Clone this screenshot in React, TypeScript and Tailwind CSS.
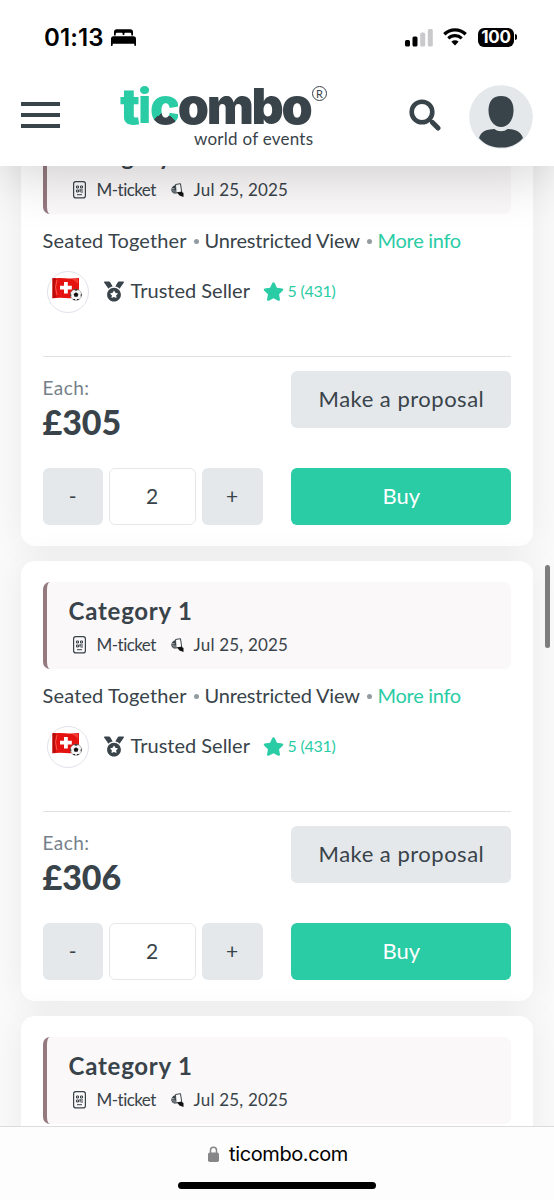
import { FaMedal, FaStar } from "react-icons/fa";

interface Listing {
  id: number;
  category: string;
  ticketType: string;
  date: string;
  price?: string;
  quantity?: number;
  rating?: string;
}

const listings: Listing[] = [
  { id: 1, category: "Category 1", ticketType: "M-ticket", date: "Jul 25, 2025", price: "£305", quantity: 2, rating: "5 (431)" },
  { id: 2, category: "Category 1", ticketType: "M-ticket", date: "Jul 25, 2025", price: "£306", quantity: 2, rating: "5 (431)" },
  { id: 3, category: "Category 1", ticketType: "M-ticket", date: "Jul 25, 2025" },
];

function StatusBar() {
  return (
    <div className="flex h-[74px] items-center pl-[44px] pr-[37px] text-black">
      <span className="mt-[2px] w-[60px] whitespace-nowrap font-['Inter',sans-serif] text-[24px] font-semibold leading-none tracking-[0.1px]">
        01:13
      </span>
      <svg className="ml-[7px] h-[17px] w-[25px]" viewBox="0 0 25 17" fill="currentColor">
        <path d="M3 6.500V3q0-2.800 2.800-2.800h13.400Q22 .2 22 3v3.500h-1.700V5q0-1.300-1.300-1.300h-4.500q-1.200 0-1.200 1.200V6h-1.600V4.900q0-1.200-1.200-1.200H6Q4.700 3.700 4.700 5v1.500z" />
        <path d="M2.500 7.300h20Q25 7.300 25 10v6.200q0 .8-.8.800t-.9-.8v-1.500H1.700v1.500q0 .8-.9.800T0 16.200V10q0-2.700 2.500-2.700z" />
      </svg>

      <div className="ml-auto flex items-center">
        <svg className="h-[19px] w-[28px]" viewBox="0 0 28 19">
          <rect x="0" y="12" width="5" height="6.500" rx="1.500" fill="#000" />
          <rect x="7.500" y="8.500" width="5" height="10" rx="1.500" fill="#000" />
          <rect x="15.200" y="4.500" width="5" height="14" rx="1.500" fill="#c9c9cb" />
          <rect x="22.800" y="1" width="5" height="17.500" rx="1.500" fill="#c9c9cb" />
        </svg>
        <svg className="ml-[10px] h-[18px] w-[24px]" viewBox="0 0 24 18" fill="none" stroke="#000">
          <path d="M1.300 6.200a15.500 15.500 0 0 1 21.400 0" strokeWidth="3.300" />
          <path d="M5.300 10.300a9.700 9.700 0 0 1 13.400 0" strokeWidth="3.100" />
          <path d="M12 17.500l-3.600-3.700a5.100 5.100 0 0 1 7.200 0z" fill="#000" stroke="none" />
        </svg>
        <div className="ml-[11px] flex h-[19px] w-[36px] items-center justify-center rounded-[6px] bg-black font-['Inter',sans-serif] text-[17px] font-bold leading-none tracking-[-0.2px] text-white">
          100
        </div>
        <div className="ml-px h-[6px] w-[2px] rounded-r-full bg-black" />
      </div>
    </div>
  );
}

function Logo() {
  return (
    <div className="relative ml-[60px] w-[207px]">
      <div className="flex h-[55px] items-end whitespace-nowrap pt-[10px] font-['Inter',sans-serif] text-[50px] font-black leading-[45px] tracking-[-2.3px] text-[#39434a]">
        <span className="text-[#2acca5]">t</span>
        <span className="font-['Roboto',sans-serif] tracking-[-1.5px] text-[#2acca5]">i</span>
        <span className="bg-[conic-gradient(from_130deg_at_50%_60%,#39434a_0_100deg,#2acca5_100deg)] bg-clip-text text-transparent">
          c
        </span>
        <span>ombo</span>
      </div>
      <span className="absolute right-0 top-[12px] flex h-[15px] w-[15px] items-center justify-center rounded-full border border-[#39434a] text-[11px] leading-none text-[#39434a]">
        R
      </span>
      <div className="ml-[74px] whitespace-nowrap text-[17px] leading-[20px] tracking-[0.25px] text-[#39434a]">
        world of events
      </div>
    </div>
  );
}

function Header() {
  return (
    <header className="relative z-10 h-[166px] bg-white shadow-[0_8px_52px_rgba(0,0,0,0.18)]">
      <StatusBar />
      <div className="flex items-start pl-[21px]">
        <div className="mt-[28px] flex w-[39px] flex-col gap-[7px]">
          <span className="h-[4px] bg-[#39434a]" />
          <span className="h-[4px] bg-[#39434a]" />
          <span className="h-[4px] bg-[#39434a]" />
        </div>
        <Logo />
        <svg className="ml-[82px] mt-[25px] h-[32px] w-[32px]" viewBox="0 0 32 32" fill="none" stroke="#39434a">
          <circle cx="13" cy="13" r="10.300" strokeWidth="4.600" />
          <path d="M20.500 20.500l2 2" strokeWidth="3" />
          <path d="M23.500 23.500l5.500 5.500" strokeWidth="5" strokeLinecap="round" />
        </svg>
        <svg className="ml-[28px] mt-[11px] h-[64px] w-[64px]" viewBox="0 0 64 64">
          <circle cx="32" cy="32" r="31.800" fill="#e4e8eb" />
          <path d="M32 11c8.500 0 12.500 5.500 12.500 14.500C44.500 35 39 42 32 42s-12.500-7-12.500-16.500C19.500 16.500 23.500 11 32 11z" fill="#39434a" />
          <path d="M10 53c2-6 6.500-8.800 15.500-9 3.500 3 9.500 3 13 0 9 .2 13.500 3 15.500 9-5.500 6.500-13 9.600-22 9.600S15.500 59.500 10 53z" fill="#39434a" />
        </svg>
      </div>
    </header>
  );
}

function MobileTicketIcon() {
  return (
    <svg className="h-[18px] w-[13px]" viewBox="0 0 13 18" fill="none" stroke="#39434a">
      <rect x=".6" y=".6" width="11.800" height="16.300" rx="2.200" strokeWidth="1.200" />
      <path d="M3.500 5h2v2h-2zM7.500 5h2v2h-2zM3.500 9h2v2h-2zM7 9h3M7.500 11h2.500M7 8v3" strokeWidth="1" />
      <path d="M4 13.700h5" strokeWidth="1" />
    </svg>
  );
}

function HandoverIcon() {
  return (
    <svg className="h-[14px] w-[13px]" viewBox="0 0 13 14">
      <path d="M4.500 1.500l5-.8 1.200 8.300-5.700 1z" fill="#fff" stroke="#39434a" strokeWidth="1" />
      <path d="M4 2.200C1.500 3 .2 5 .3 7.200c.2 2 2 3.200 4.500 3.600L4 7.500l1.200-.4z" fill="#39434a" />
      <path d="M1 5.500h2.500M1 7.200h2.700M1.800 8.900h2.200" stroke="#fff" strokeWidth=".5" />
      <path d="M6 9.500l4.500-.8 2 1.300v4l-4-1.500z" fill="#111" />
    </svg>
  );
}

function SellerAvatar() {
  return (
    <div className="flex h-[42px] w-[42px] items-center justify-center rounded-full border border-[#e0e3ea] bg-white">
      <svg className="h-[40px] w-[40px]" viewBox="0 0 40 40">
        <path d="M4.500 6.300q7-.6 13-.1t13.500-.1V25.500q-7 1-14 .5t-12.500.3z" fill="#e5130f" />
        <path d="M4.500 6.300q3.500-.5 3.500.2-2 9 0 19l-3.500.8z" fill="#b90d0c" />
        <path d="M9 8q-3 7 0 15" fill="none" stroke="#ff7468" strokeWidth=".7" />
        <path d="M24 7q4 0 6-.6V12q-2-2.500-6-5z" fill="#f43c32" />
        <path d="M16 10h3.800v3.800h4v3.600h-4v4H16v-4h-4v-3.600h4z" fill="#fff" />
        <circle cx="28" cy="22.800" r="5.600" fill="#f5f5f5" stroke="#777" strokeWidth=".5" />
        <path d="M28 20.300l2.400 1.700-.9 2.800h-3l-.9-2.800z" fill="#111" />
        <path d="M25.500 17.800l2.500.9 2.500-.9q-2.500-1-5 0zM22.500 21.300l.9 1.600-.4 2q-1-1.800-.5-3.600zM33.500 21.300l-.9 1.600.4 2q1-1.800.5-3.600zM24.600 27l2.100.1.700 1.100q-1.600 0-2.800-1.200zM31.400 27l-2.100.1-.7 1.100q1.600 0 2.800-1.200z" fill="#111" />
      </svg>
    </div>
  );
}

function Dot() {
  return <span className="ml-[7px] mr-[6px] mt-[3px] h-[5px] w-[5px] rounded-full bg-[#929ba1]" />;
}

function ListingDetails({ listing }: { listing: Listing }) {
  return (
    <>
      <div className="mt-[13px] flex items-center whitespace-nowrap text-[20px] leading-[26px]">
        <span className="w-[144px] tracking-[0.13px]">Seated Together</span>
        <Dot />
        <span className="w-[155px] tracking-[-0.18px]">Unrestricted View</span>
        <Dot />
        <a className="tracking-[-0.3px] text-[#2acca5]">More info</a>
      </div>

      <div className="mt-[18px] flex h-[42px] items-center whitespace-nowrap pl-[4px]">
        <SellerAvatar />
        <FaMedal className="-mt-[2px] ml-[15px] h-[21px] w-[20px]" />
        <span className="-mt-[5px] ml-[7px] w-[120px] text-[20px]">Trusted Seller</span>
        <FaStar className="-mt-[2px] ml-[12px] h-[19px] w-[21px] text-[#2acca5]" />
        <span className="-mt-[2px] ml-[4px] text-[16px] tracking-[-0.25px] text-[#2acca5]">{listing.rating}</span>
      </div>

      <div className="mt-[43px] flex justify-between border-t border-[#dfe3e6] pt-[14px]">
        <div>
          <div className="mt-[4px] text-[19px] leading-[26px] tracking-[0.4px] text-[#75818a]">Each:</div>
          <div className="mt-px text-[34px] font-black leading-[40px] tracking-[-0.1px]">{listing.price}</div>
        </div>
        <button className="h-[57px] w-[220px] rounded-[6px] bg-[#e4e8eb] pb-[2px] text-[22px] tracking-[0.5px]">
          Make a proposal
        </button>
      </div>

      <div className="mt-[26px] flex h-[57px] text-[21px]">
        <button className="w-[60px] rounded-[6px] bg-[#e4e8eb] pb-[2px]">-</button>
        <div className="ml-[6px] flex w-[87px] items-center justify-center rounded-[6px] border-[1.5px] border-[#e4e8eb] pb-[2px]">
          {listing.quantity}
        </div>
        <button className="ml-[6px] w-[61px] rounded-[6px] bg-[#e4e8eb] pb-[2px]">+</button>
        <button className="ml-auto w-[220px] rounded-[6px] bg-[#2acca5] pb-[2px] text-[22px] text-white">Buy</button>
      </div>
    </>
  );
}

function ListingCard({ listing }: { listing: Listing }) {
  return (
    <article className="flex h-[440px] shrink-0 flex-col rounded-[14px] bg-white px-[21.300px] pt-[21px] shadow-[0_0_36px_rgba(0,0,0,0.065)]">
      <div className="flex h-[87px] flex-col rounded-[7px] border-l-4 border-[#94797f] bg-[#faf8f9] pl-[21px] pt-[14px]">
        <h2 className="pl-px text-[24px] font-bold leading-[30px] tracking-[0.75px]">{listing.category}</h2>
        <div className="mt-[8px] flex items-center whitespace-nowrap pl-[5px] text-[17px] leading-[22px]">
          <MobileTicketIcon />
          <span className="ml-[11px] w-[59px] tracking-[-0.55px]">{listing.ticketType}</span>
          <span className="ml-[15px]">
            <HandoverIcon />
          </span>
          <span className="ml-[10px] tracking-[0.2px]">{listing.date}</span>
        </div>
      </div>
      {listing.price && <ListingDetails listing={listing} />}
    </article>
  );
}

function BrowserBar() {
  return (
    <footer className="relative z-10 flex h-[74px] flex-col items-center border-t border-[#dcdcde] bg-[#fdfdfd]">
      <div className="mt-[14px] flex h-[26px] items-center gap-[10px] pl-[2px] text-black">
        <svg className="h-[16px] w-[11px]" viewBox="0 0 11 16">
          <path d="M2.500 8V4.300a3 3 0 0 1 6 0V8" fill="none" stroke="#868689" strokeWidth="1.500" />
          <rect x="0" y="6.500" width="11" height="9.500" rx="1.800" fill="#868689" />
        </svg>
        <span className="font-['Inter',sans-serif] text-[20px] leading-none tracking-[-0.4px]">ticombo.com</span>
      </div>
      <div className="mt-[15px] h-[7px] w-[198px] rounded-full bg-black" />
    </footer>
  );
}

function App() {
  return (
    <div className="flex h-[1200px] w-[554px] flex-col overflow-hidden bg-[#fafafa] font-['Lato',sans-serif] text-[#39434a]">
      <Header />
      <main className="relative h-[960px] overflow-hidden">
        <div className="-mt-[60px] flex flex-col gap-[15px] px-[21.300px]">
          {listings.map((listing) => (
            <ListingCard key={listing.id} listing={listing} />
          ))}
        </div>
        {/* scroll position indicator */}
        <div className="absolute right-[4px] top-[399px] h-[83px] w-[5px] rounded-full bg-[#7d7d7d]" />
      </main>
      <BrowserBar />
    </div>
  );
}

export default App;
